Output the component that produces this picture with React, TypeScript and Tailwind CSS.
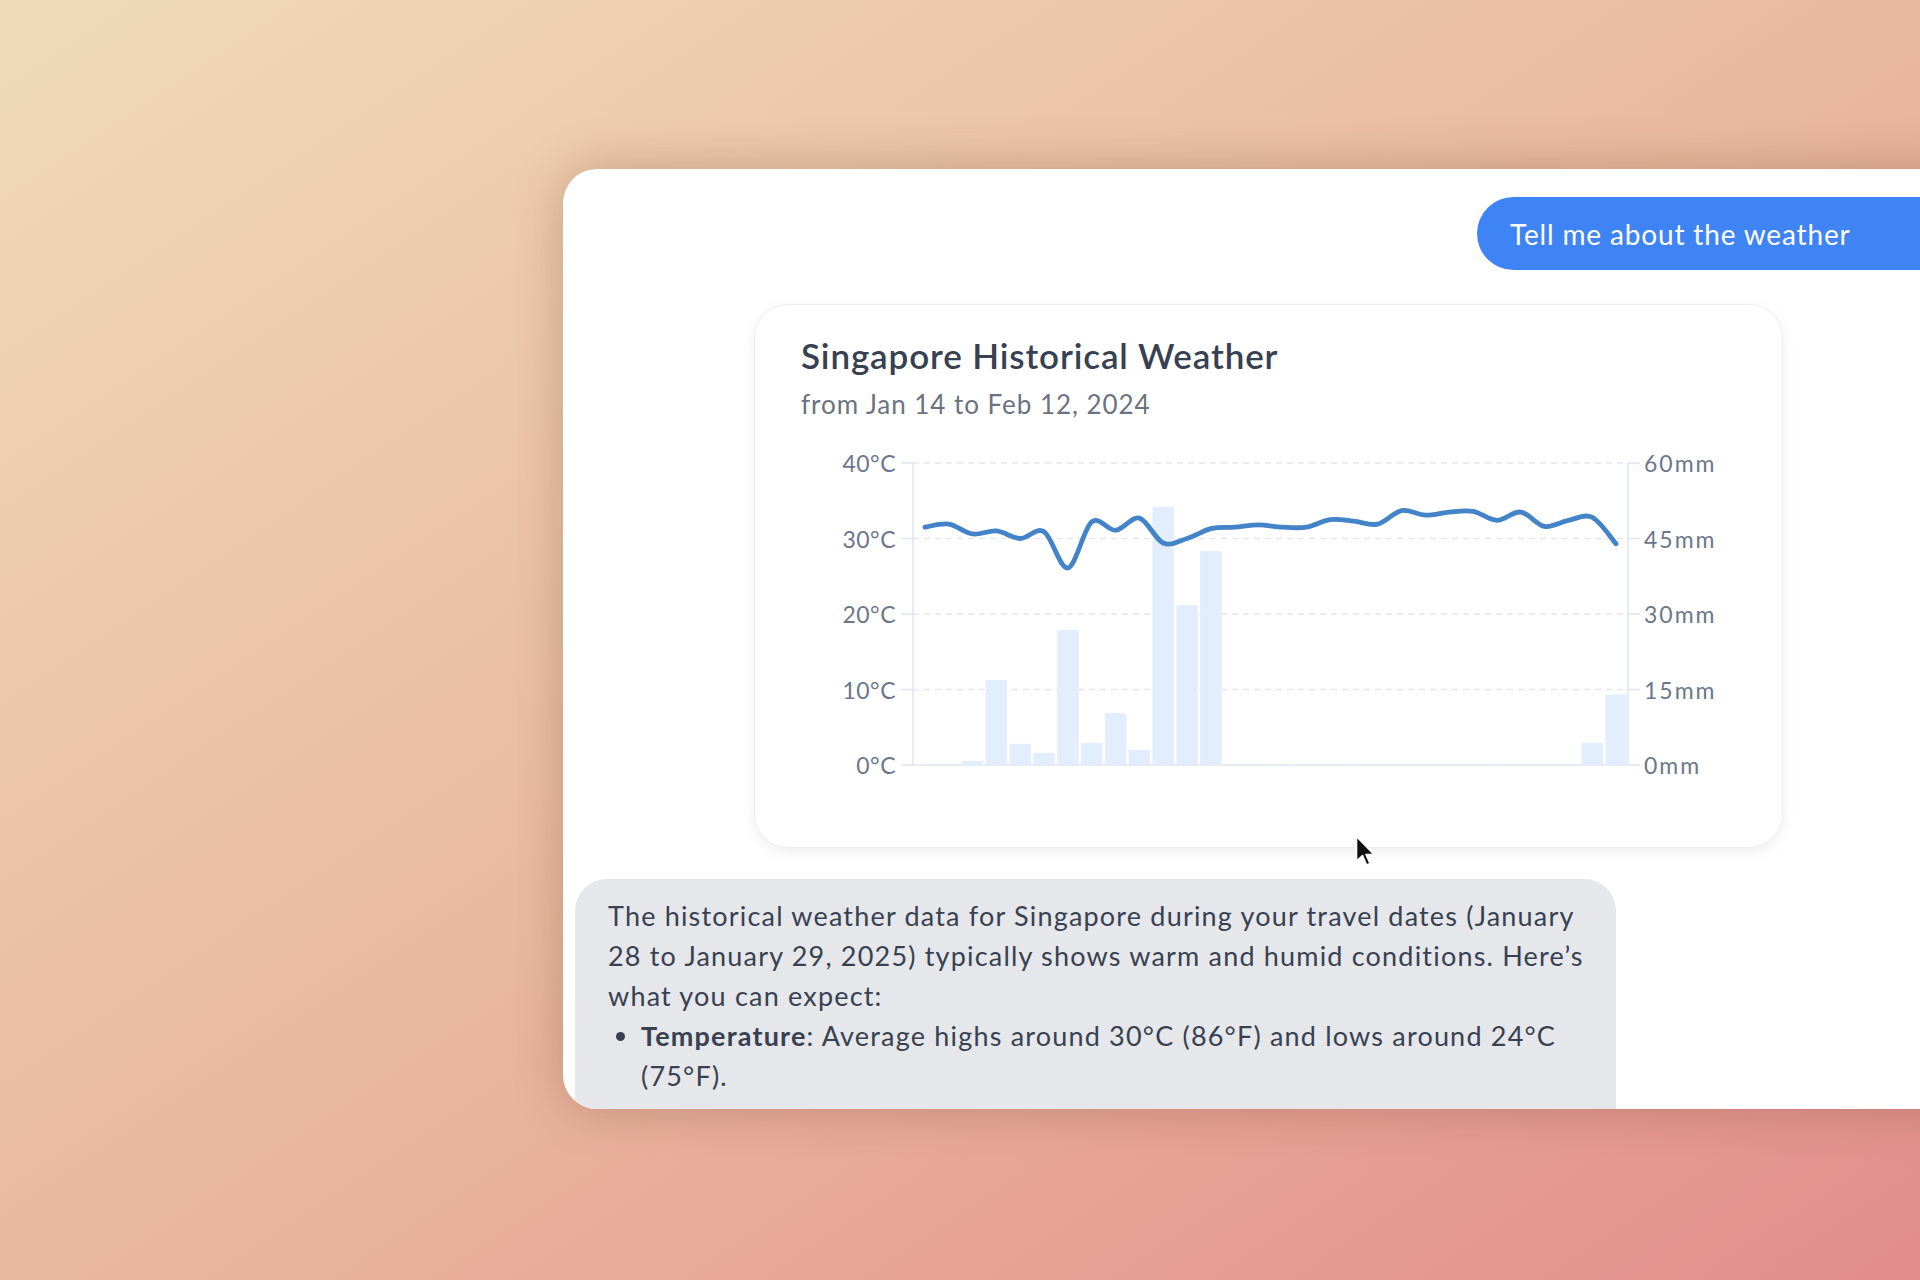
import React from 'react'

// Daily readings, Jan 14 → Feb 12. Rain in mm (bars), mean temp in °C (line).
const rain = [0, 0, 0.8, 16.9, 4.2, 2.4, 26.8, 4.4, 10.3, 3, 51.3, 31.8, 42.5, 0, 0, 0.2, 0, 0, 0.2, 0, 0, 0, 0, 0, 0.2, 0, 0, 0, 4.4, 14]
const temp = [
  31.5, 31.9, 30.6, 31.0, 30.0, 30.9, 26.1, 32.2, 31.1, 32.7, 29.4, 30.0, 31.3, 31.5, 31.8, 31.5, 31.5, 32.5, 32.3, 31.9,
  33.7, 33.1, 33.5, 33.6, 32.4, 33.5, 31.6, 32.4, 32.8, 29.3,
]

// plot box inside the svg
const X0 = 112
const X1 = 827
const Y_TOP = 23
const Y_BASE = 325
const step = (X1 - X0) / rain.length
const yTemp = (t: number) => Y_BASE - (t / 40) * (Y_BASE - Y_TOP)
const yRain = (mm: number) => Y_BASE - (mm / 60) * (Y_BASE - Y_TOP)

// catmull-rom through the points, as cubic segments
function smoothPath(pts: [number, number][]) {
  let d = `M${pts[0][0]},${pts[0][1]}`
  for (let i = 0; i < pts.length - 1; i++) {
    const p0 = pts[i - 1] ?? pts[i]
    const p1 = pts[i]
    const p2 = pts[i + 1]
    const p3 = pts[i + 2] ?? p2
    const c1x = p1[0] + (p2[0] - p0[0]) / 6
    const c1y = p1[1] + (p2[1] - p0[1]) / 6
    const c2x = p2[0] - (p3[0] - p1[0]) / 6
    const c2y = p2[1] - (p3[1] - p1[1]) / 6
    d += ` C${c1x},${c1y} ${c2x},${c2y} ${p2[0]},${p2[1]}`
  }
  return d
}

function WeatherChart() {
  const ticks = [0, 1, 2, 3, 4]
  const line = smoothPath(temp.map((t, i) => [X0 + (i + 0.5) * step, yTemp(t)]))
  return (
    <svg width="940" height="360" viewBox="0 0 940 360" className="block">
      {ticks.map((k) => {
        const y = Y_BASE - (k * (Y_BASE - Y_TOP)) / 4
        return (
          <g key={k}>
            {k > 0 ? (
              <line x1={X0} x2={X1} y1={y} y2={y} stroke="#e3e6ea" strokeWidth="1.5" strokeDasharray="6 5" />
            ) : null}
            <line x1={X0 - 12} x2={X0} y1={y} y2={y} stroke="#dfe6f0" strokeWidth="1.5" />
            <line x1={X1} x2={X1 + 12} y1={y} y2={y} stroke="#dfe6f0" strokeWidth="1.5" />
            <text x={95} y={y + 9} textAnchor="end" fontSize="23" fill="#6b778c" letterSpacing="0.5">
              {k * 10}°C
            </text>
            <text x={843} y={y + 9} fontSize="23" fill="#6b778c" letterSpacing="2">
              {k * 15}mm
            </text>
          </g>
        )
      })}
      <line x1={X0} x2={X0} y1={Y_TOP} y2={Y_BASE} stroke="#dfe6f0" strokeWidth="1.5" />
      <line x1={X1} x2={X1} y1={Y_TOP} y2={Y_BASE} stroke="#dfe6f0" strokeWidth="1.5" />
      <line x1={X0} x2={X1} y1={Y_BASE} y2={Y_BASE} stroke="#dfe6f0" strokeWidth="1.5" />
      {rain.map((mm, i) =>
        mm > 0 ? (
          <rect
            key={i}
            x={X0 + i * step + 1.2}
            y={yRain(mm)}
            width={step - 2.4}
            height={Y_BASE - yRain(mm)}
            fill="#e2edfd"
          />
        ) : null,
      )}
      <path d={line} fill="none" stroke="#4384c8" strokeWidth="4.8" strokeLinecap="round" strokeLinejoin="round" />
    </svg>
  )
}

function Cursor() {
  return (
    <svg width="22" height="34" viewBox="0 0 22 34" className="absolute left-[1355px] top-[835px]">
      <path d="M1.5 1.5 L1.5 26 L7.5 20.5 L11.5 30 L15 28.5 L11 19.5 L19 19.5 Z" fill="#111" stroke="#fff" strokeWidth="1.6" strokeLinejoin="round" />
    </svg>
  )
}

export default function App() {
  return (
    <div
      className="relative h-[1280px] w-[1920px] overflow-hidden bg-[linear-gradient(to_bottom_right,#f0dbb9,#eab99f_50%,#e38d8d)] pl-[563px] pt-[169px]"
      style={{ fontFamily: 'Lato, "Noto Sans", sans-serif' }}
    >
      <div className="flex h-[940px] w-[1440px] shrink-0 flex-col overflow-hidden rounded-l-[34px] bg-white shadow-[0_0_50px_rgba(90,50,20,0.28)]">
        <div className="flex justify-end pr-[46px] pt-[28px]">
          <div className="flex h-[73px] w-[480px] items-center rounded-l-full bg-[#3f84f5] pl-[33px] text-[28px] tracking-[0.03em] text-white">
            Tell me about the weather
          </div>
        </div>

        <div className="ml-[191px] mt-[34px] h-[544px] w-[1029px] shrink-0 rounded-[34px] border border-[#eceef2] bg-white pl-[46px] pt-[29px] shadow-[0_4px_14px_rgba(0,0,0,0.07)]">
          <div className="text-[35px] font-semibold leading-[1.2] tracking-[0.025em] text-[#374151]">
            Singapore Historical Weather
          </div>
          <div className="mt-[13px] text-[26px] leading-[1.2] tracking-[0.037em] text-[#6b7280]">
            from Jan 14 to Feb 12, 2024
          </div>
          <div className="mt-[20px]">
            <WeatherChart />
          </div>
        </div>

        <div className="ml-[12px] mt-[31px] w-[1041px] flex-1 shrink-0 rounded-t-[32px] bg-[#e5e7eb] pl-[33px] pr-[14px] pt-[17px] text-[27px] leading-[40px] tracking-[0.044em] text-[#374151]">
          <p>
            The historical weather data for Singapore during your travel dates (January 28 to January 29, 2025) typically
            shows warm and humid conditions. Here’s what you can expect:
          </p>
          <ul className="list-disc pl-[33px]">
            <li>
              <span className="font-bold">Temperature</span>: Average highs around 30°C (86°F) and lows around 24°C (75°F).
            </li>
          </ul>
        </div>
      </div>
      <Cursor />
    </div>
  )
}
